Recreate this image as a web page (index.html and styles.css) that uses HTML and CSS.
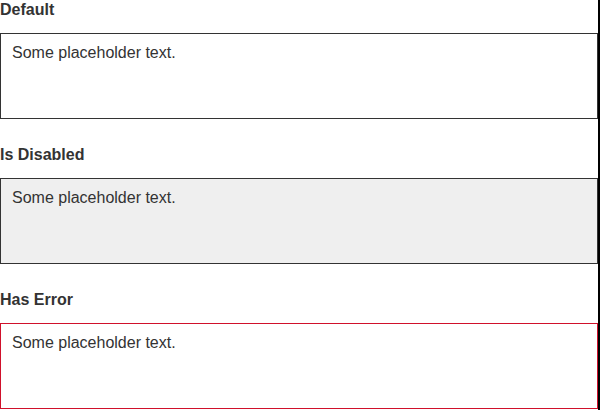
FILE: index.html
```html
<!DOCTYPE html>
<html lang="en">
<head>
<meta charset="utf-8">
<title>Textarea states</title>
<link rel="stylesheet" href="styles.css">
</head>
<body>
<div class="page">
  <div class="field">
    <label class="label" for="ta-default">Default</label>
    <textarea id="ta-default" class="textarea" placeholder="Some placeholder text."></textarea>
  </div>
  <div class="field">
    <label class="label" for="ta-disabled">Is Disabled</label>
    <textarea id="ta-disabled" class="textarea" placeholder="Some placeholder text." disabled></textarea>
  </div>
  <div class="field">
    <label class="label" for="ta-error">Has Error</label>
    <textarea id="ta-error" class="textarea textarea--error" placeholder="Some placeholder text."></textarea>
  </div>
</div>
</body>
</html>
```

FILE: styles.css
```css
html, body {
  margin: 0;
  padding: 0;
  background: #fff;
}

body {
  font-family: "Liberation Sans", Arial, sans-serif;
  color: #333;
}

.page {
  width: 598px;
  min-height: 410px;
  border-right: 2px solid #000;
  display: flex;
  flex-direction: column;
}

.field {
  display: flex;
  flex-direction: column;
  margin-bottom: 26px;
}

.field:last-child {
  margin-bottom: 0;
}

.label {
  font-size: 16px;
  line-height: 19px;
  font-weight: bold;
  color: #333;
  margin-bottom: 14px;
}

.textarea {
  box-sizing: border-box;
  width: 598px;
  height: 86px;
  margin: 0;
  padding: 10px 11px 6px;
  border: 1px solid #333;
  border-radius: 0;
  background: #fff;
  font-family: "Liberation Sans", Arial, sans-serif;
  font-size: 16px;
  color: #333;
  resize: none;
  outline: none;
  overflow: hidden;
}

.textarea::placeholder {
  color: #333;
  opacity: 1;
}

.textarea:disabled {
  background: #efefef;
  border-color: #333;
}

.textarea--error {
  border-color: #d0112b;
}
```
